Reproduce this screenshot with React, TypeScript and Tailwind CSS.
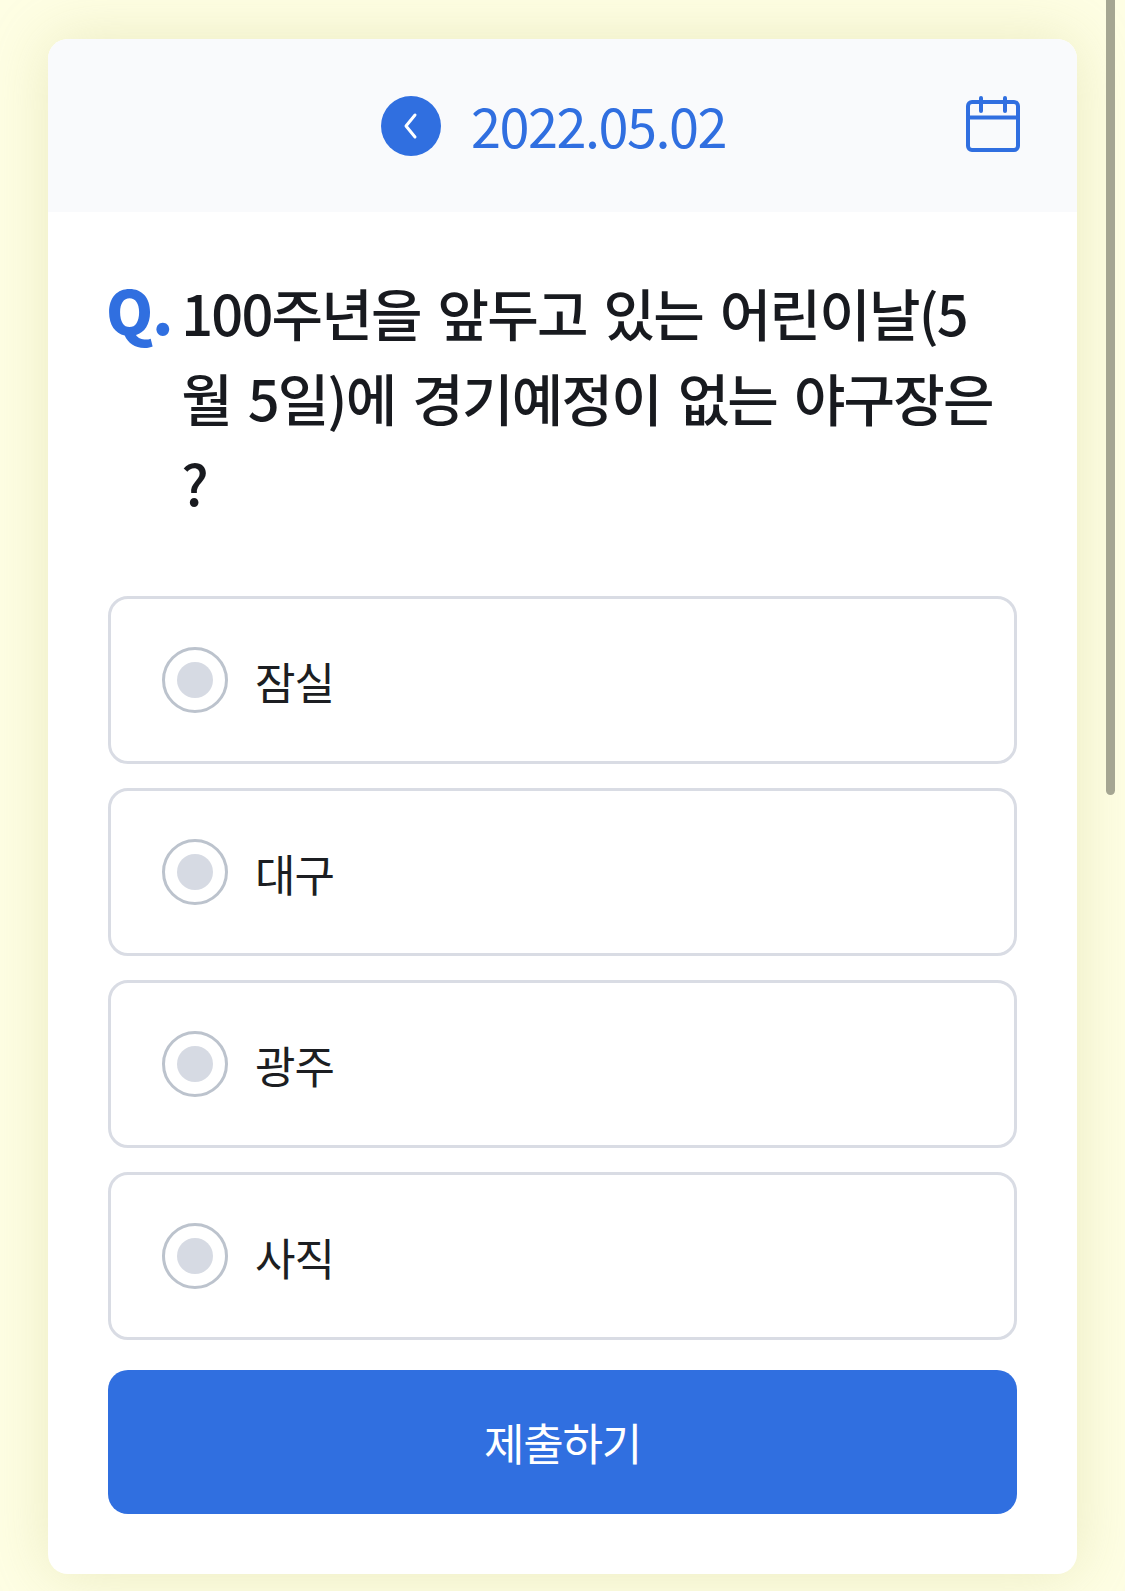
const OPTIONS = ['잠실', '대구', '광주', '사직'];

function RadioMark() {
  return (
    <span className="flex h-[66px] w-[66px] shrink-0 items-center justify-center rounded-full border-[3px] border-[#bcc3cd] bg-white">
      <span className="h-[36px] w-[36px] rounded-full bg-[#d6dae3]" />
    </span>
  );
}

function CalendarIcon() {
  return (
    <svg width="54" height="56" viewBox="0 0 54 56" fill="none" stroke="#306fe0" strokeWidth="4" strokeLinecap="round" strokeLinejoin="round">
      <rect x="2" y="6" width="50" height="48" rx="4" />
      <path d="M2 21.5H52" />
      <path d="M15 2V15" />
      <path d="M39 2V15" />
    </svg>
  );
}

export default function App() {
  return (
    <div
      className="relative h-[1591px] overflow-hidden bg-[#fefee4] pl-[48px] pr-[48px] pt-[39px]"
      style={{ fontFamily: '"Noto Sans CJK KR", "Noto Sans", sans-serif' }}
    >
      <div className="w-[1029px] overflow-hidden rounded-[20px] bg-white shadow-[0_0_60px_rgba(190,190,110,0.3)]">
        {/* Header */}
        <div className="relative flex h-[173px] items-center justify-center bg-[#f9fafc]">
          <div className="flex items-center gap-[30px] pr-[18px]">
            <span className="flex h-[60px] w-[60px] items-center justify-center rounded-full bg-[#306fe0]">
              <svg width="20" height="30" viewBox="0 0 20 30" fill="none" stroke="white" strokeWidth="3" strokeLinecap="round" strokeLinejoin="round">
                <path d="M14 4L5 15L14 26" />
              </svg>
            </span>
            <span className="-mt-[2px] text-[54px] leading-none tracking-[-1.5px] text-[#306fe0]">2022.05.02</span>
          </div>
          <span className="absolute right-[57px] top-[57px]">
            <CalendarIcon />
          </span>
        </div>

        {/* Question + options */}
        <div className="px-[60px] pb-[60px] pt-[57px]">
          <div className="flex gap-[9px]">
            <span className="-ml-[2px] -mt-[3px] shrink-0 text-[60px] font-extrabold leading-[85px] tracking-[-1px] text-[#306fe0]">Q.</span>
            <p className="min-w-0 text-[56px] font-medium leading-[85px] tracking-[-1.8px] text-[#181a1f] [word-spacing:6px]">
              100주년을 앞두고 있는 어린이날(5
              <br />
              월 5일)에 경기예정이 없는 야구장은
              <br />?
            </p>
          </div>

          <div className="mt-[72px] flex flex-col gap-[24px]">
            {OPTIONS.map((label) => (
              <div key={label} className="flex h-[168px] items-center gap-[27px] rounded-[20px] border-[3px] border-[#d9dce4] bg-white pl-[51px]">
                <RadioMark />
                <span className="mt-[2px] text-[44px] leading-none tracking-[-1px] text-[#1c1e22]">{label}</span>
              </div>
            ))}
          </div>

          <button className="mt-[30px] flex h-[144px] w-full items-center justify-center rounded-[20px] bg-[#306fe0] text-[44px] tracking-[-1.2px] text-white">
            제출하기
          </button>
        </div>
      </div>

      {/* Scrollbar thumb */}
      <div className="absolute right-[10px] top-0 h-[795px] w-[9px] rounded-b-full bg-[#a5a692]" />
    </div>
  );
}
